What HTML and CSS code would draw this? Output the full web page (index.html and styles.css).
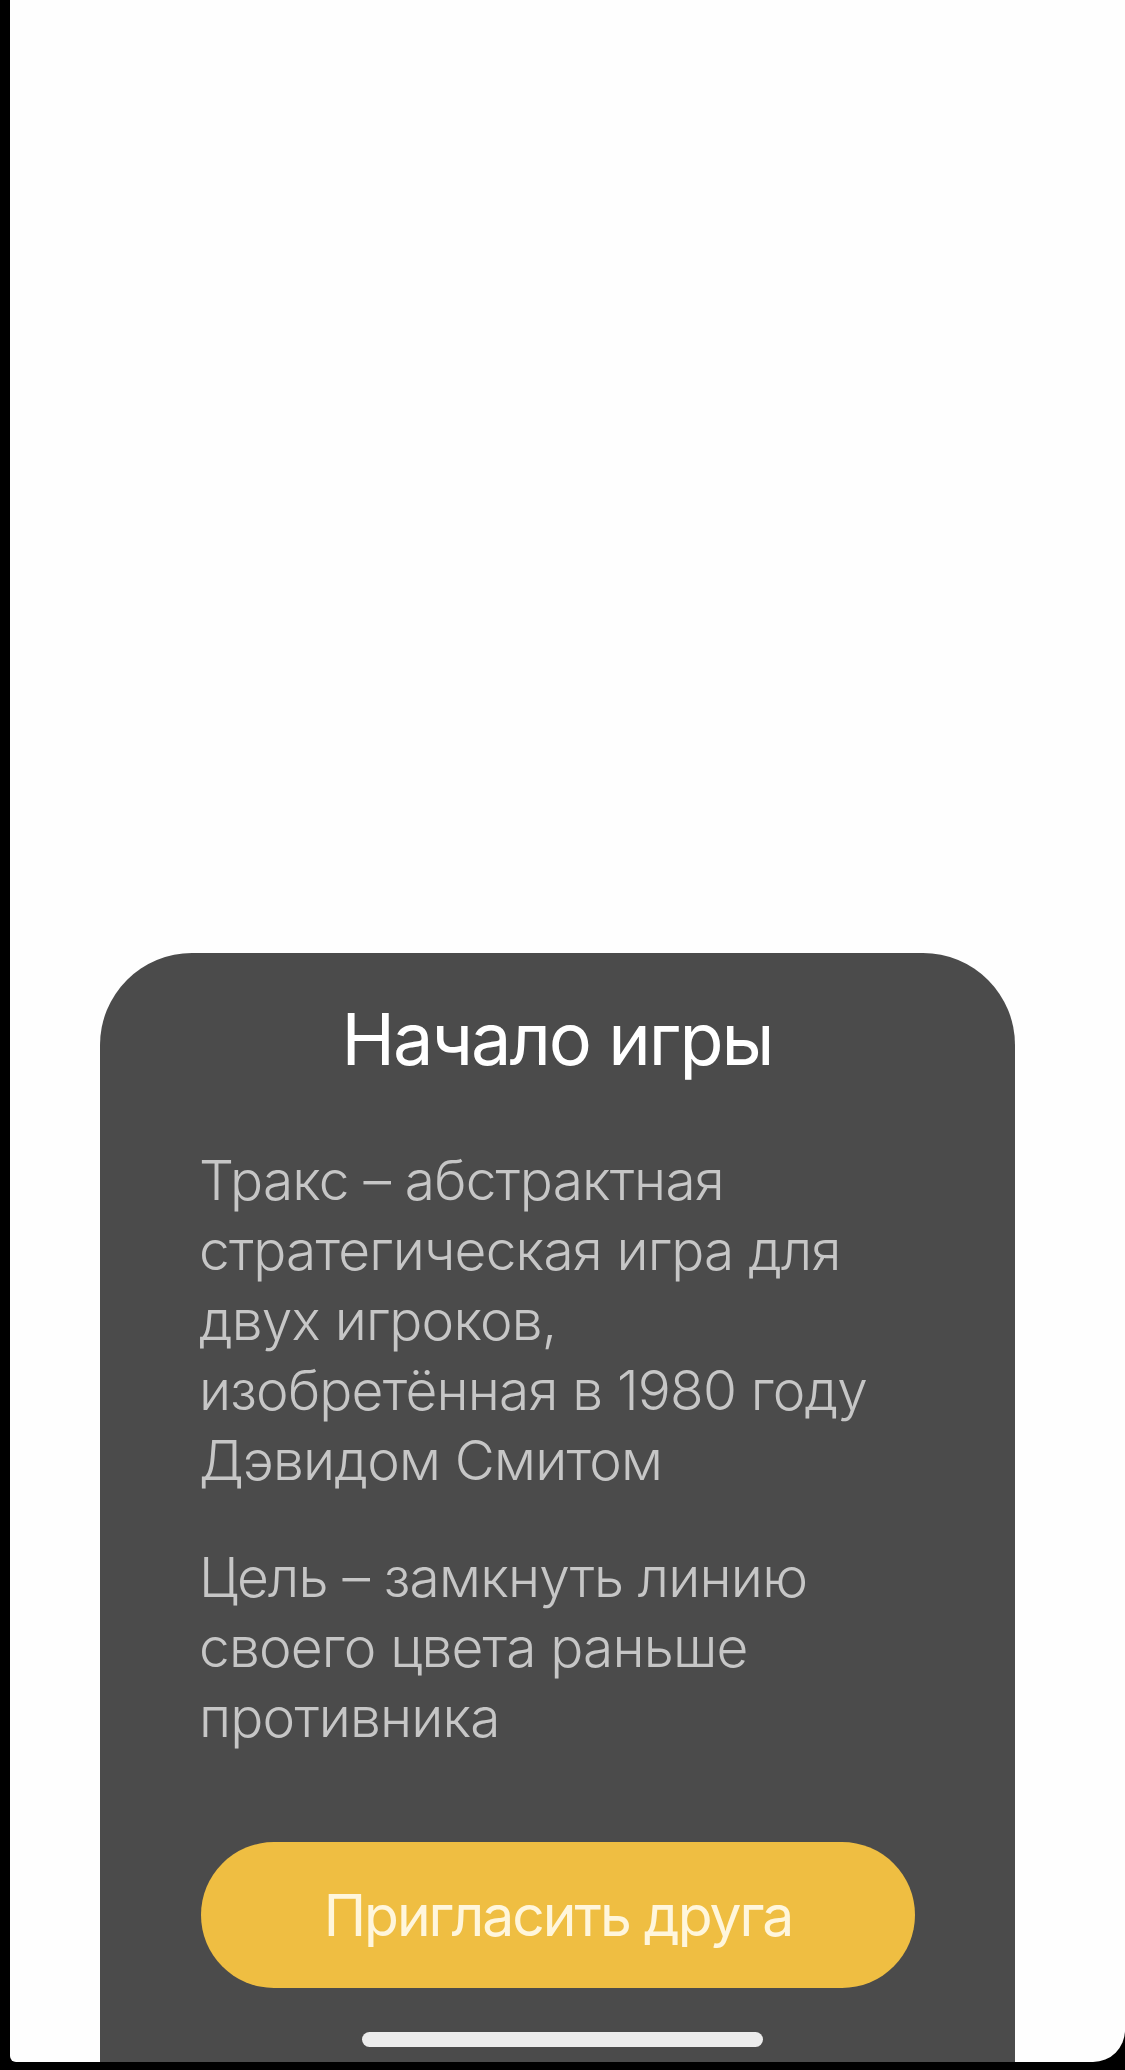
FILE: index.html
```html
<!DOCTYPE html>
<html lang="ru">
<head>
<meta charset="utf-8">
<title>Начало игры</title>
<link rel="stylesheet" href="styles.css">
</head>
<body>
<div class="screen">
  <section class="sheet">
    <h1 class="sheet-title">Начало игры</h1>
    <p class="sheet-text">Тракс – абстрактная стратегическая игра для двух игроков, изобретённая в&nbsp;1980 году Дэвидом Смитом</p>
    <p class="sheet-text sheet-text-second">Цель – замкнуть линию своего цвета раньше противника</p>
    <button class="invite-btn" type="button">Пригласить друга</button>
  </section>
  <div class="home-indicator"></div>
</div>
</body>
</html>
```

FILE: styles.css
```css
html, body {
  margin: 0;
  padding: 0;
  background: #000;
}

body {
  width: 1125px;
  height: 2070px;
  overflow: hidden;
  font-family: "Inter", "Roboto", "Liberation Sans", sans-serif;
}

.screen {
  position: relative;
  margin-left: 10px;
  height: 2062px;
  background: #fefefe;
  border-bottom-left-radius: 6px;
  border-bottom-right-radius: 32px;
  overflow: hidden;
  padding-top: 953px;
  box-sizing: border-box;
}

.sheet {
  margin-left: 90px;
  width: 915px;
  height: 1109px;
  box-sizing: border-box;
  background: #4b4b4b;
  border-top-left-radius: 92px;
  border-top-right-radius: 92px;
  padding: 42px 100px 0 99px;
  display: flex;
  flex-direction: column;
  align-items: flex-start;
}

.sheet-title {
  align-self: center;
  margin: 0 0 62px 0;
  font-size: 72px;
  line-height: 88px;
  font-weight: 400;
  color: #ffffff;
  letter-spacing: -2px;
}

.sheet-text {
  margin: 0;
  font-size: 55px;
  line-height: 70px;
  font-weight: 350;
  color: #c6c6c6;
  letter-spacing: -0.8px;
  max-width: 715px;
}

.sheet-text-second {
  margin-top: 47px;
}

.invite-btn {
  margin-top: 90px;
  margin-left: 2px;
  width: 714px;
  height: 146px;
  border: none;
  border-radius: 73px;
  background: #efbe42;
  color: #fff6dc;
  font-family: inherit;
  font-size: 57px;
  font-weight: 400;
  letter-spacing: -2px;
  display: flex;
  align-items: center;
  justify-content: center;
  padding: 0;
}

.home-indicator {
  position: absolute;
  left: 352px;
  top: 2032px;
  width: 401px;
  height: 15px;
  border-radius: 8px;
  background: #ececec;
}
```
